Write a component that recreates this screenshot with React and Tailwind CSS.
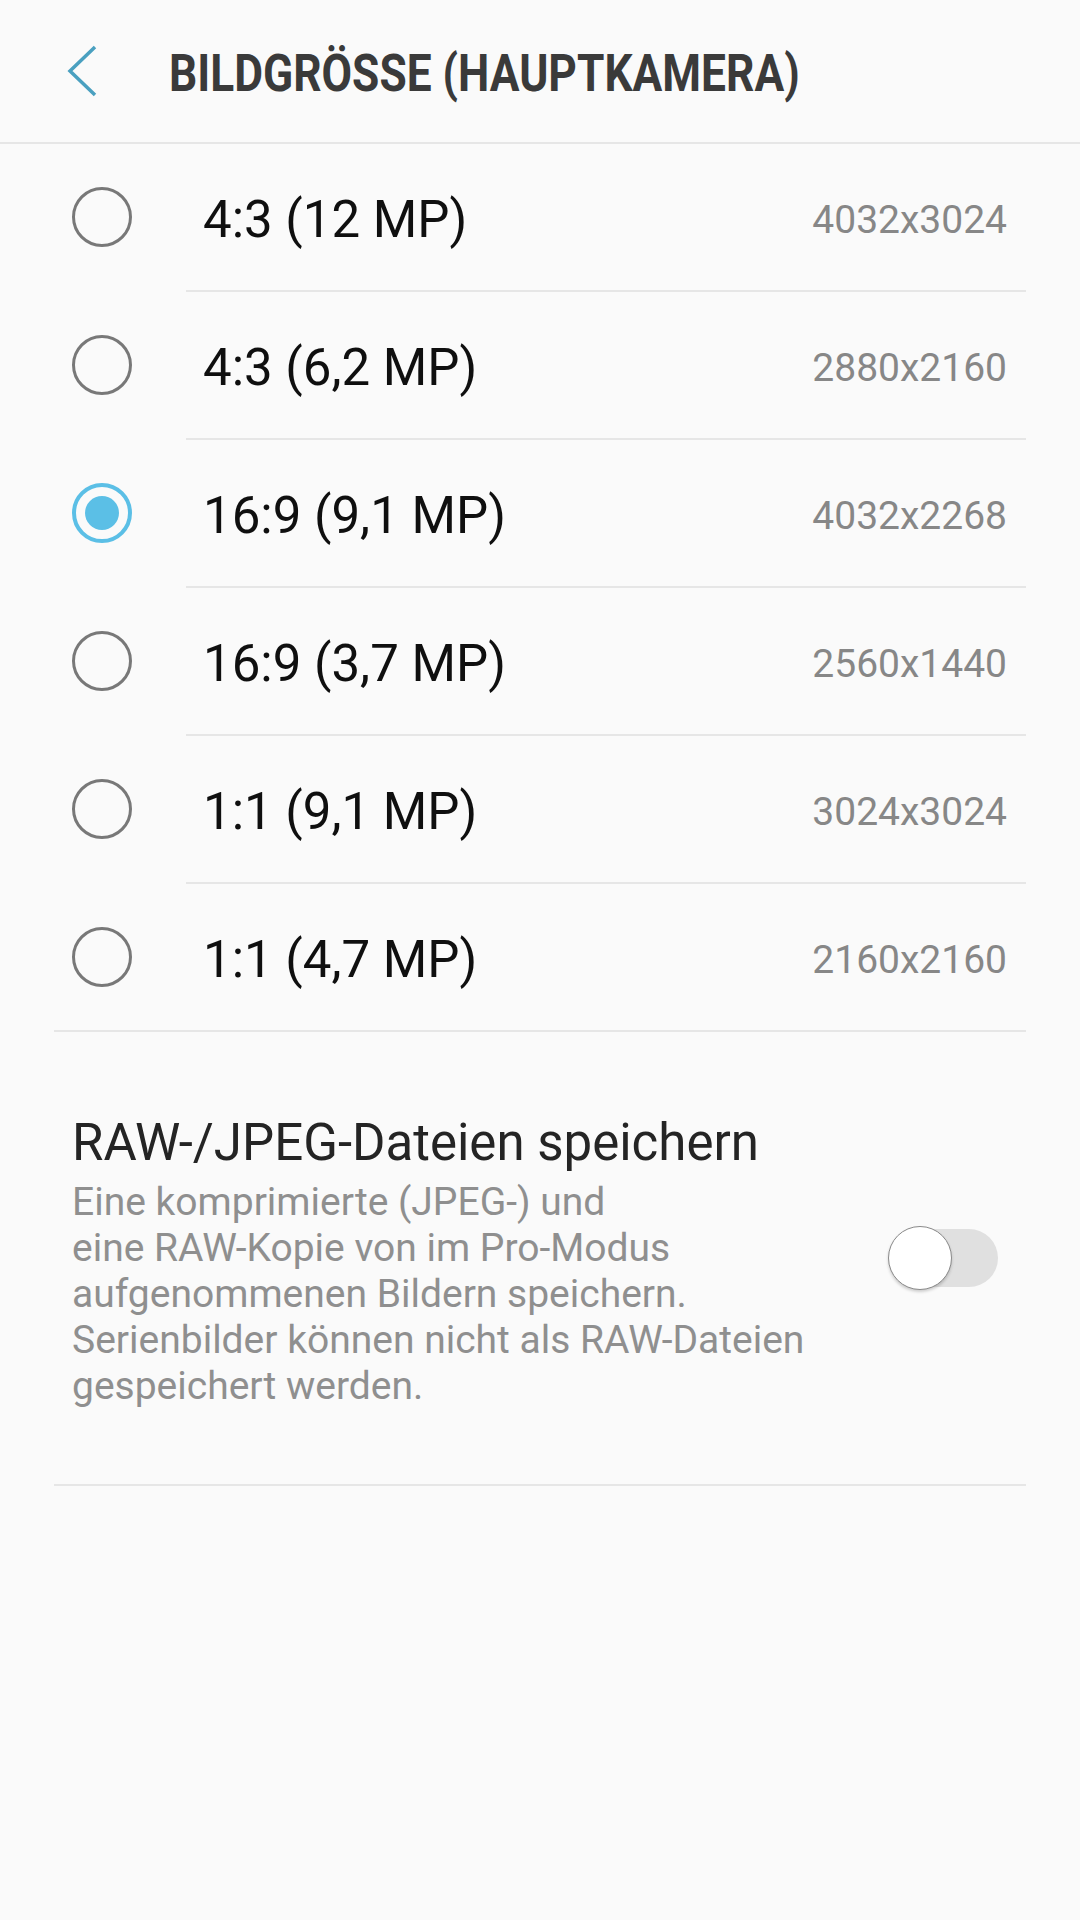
import React from "react";

const rows = [
  { label: "4:3 (12 MP)", res: "4032x3024", selected: false },
  { label: "4:3 (6,2 MP)", res: "2880x2160", selected: false },
  { label: "16:9 (9,1 MP)", res: "4032x2268", selected: true },
  { label: "16:9 (3,7 MP)", res: "2560x1440", selected: false },
  { label: "1:1 (9,1 MP)", res: "3024x3024", selected: false },
  { label: "1:1 (4,7 MP)", res: "2160x2160", selected: false },
];

function Radio({ selected }) {
  if (selected) {
    return (
      <div className="w-[60px] h-[60px] rounded-full border-[4px] border-[#5bbfe6] flex items-center justify-center shrink-0">
        <div className="w-[34px] h-[34px] rounded-full bg-[#5bbfe6]" />
      </div>
    );
  }
  return <div className="w-[60px] h-[60px] rounded-full border-[3px] border-[#787878] shrink-0" />;
}

export default function App() {
  return (
    <div className="w-[1080px] h-[1920px] bg-[#fafafa] font-['Roboto',sans-serif] overflow-hidden">
      {/* Header */}
      <div className="h-[144px] flex items-center border-b-2 border-[#e6e6e6]">
        <div className="w-[169px] h-[142px] flex items-center shrink-0">
          <svg className="ml-[66px]" width="34" height="54" viewBox="0 0 34 54" fill="none">
            <polyline points="29,3 4,27 29,51" stroke="#4aa0c0" strokeWidth="3.5" strokeLinecap="butt" strokeLinejoin="miter" fill="none" />
          </svg>
        </div>
        <div className="h-[142px] flex items-center pt-[6px]">
          <span className="inline-block origin-left scale-x-[0.852] text-[52px] leading-[60px] font-bold text-[#3a3a3a] whitespace-nowrap">
            BILDGRÖSSE (HAUPTKAMERA)
          </span>
        </div>
      </div>

      {/* List */}
      <div>
        {rows.map((r, i) => (
          <div key={i}>
            <div className="h-[146px] flex items-center pl-[72px] pr-[73px]">
              <Radio selected={r.selected} />
              <div className="ml-[71px] flex-1 pt-[5px] text-[51px] leading-[60px] text-[#0f0f0f] whitespace-nowrap">
                {r.label}
              </div>
              <div className="pt-[5px] text-[39px] leading-[46px] text-[#878787] whitespace-nowrap">{r.res}</div>
            </div>
            {i < rows.length - 1 ? (
              <div className="h-[2px] bg-[#e6e6e6] ml-[186px] mr-[54px]" />
            ) : (
              <div className="h-[2px] bg-[#e6e6e6] ml-[54px] mr-[54px]" />
            )}
          </div>
        ))}
      </div>

      {/* RAW section */}
      <div className="h-[452px] flex items-center pl-[72px] pr-[82px]">
        <div className="flex-1 pt-[6px]">
          <div className="text-[51px] leading-[58px] text-[#242424] whitespace-nowrap">
            RAW-/JPEG-Dateien speichern
          </div>
          <div className="mt-[7px] text-[39px] leading-[46px] text-[#8f8f8f] whitespace-nowrap">
            Eine komprimierte (JPEG-) und
            <br />
            eine RAW-Kopie von im Pro-Modus
            <br />
            aufgenommenen Bildern speichern.
            <br />
            Serienbilder können nicht als RAW-Dateien
            <br />
            gespeichert werden.
          </div>
        </div>
        <div className="relative w-[110px] h-[64px] shrink-0">
          <div className="absolute left-[4px] right-0 top-[3px] bottom-[3px] rounded-full bg-[#e0e0e0]" />
          <div className="absolute left-0 top-0 w-[64px] h-[64px] rounded-full bg-white border border-[#8a8a8a] shadow-[0_2px_3px_rgba(0,0,0,0.18)]" />
        </div>
      </div>
      <div className="h-[2px] bg-[#e6e6e6] ml-[54px] mr-[54px]" />
    </div>
  );
}
